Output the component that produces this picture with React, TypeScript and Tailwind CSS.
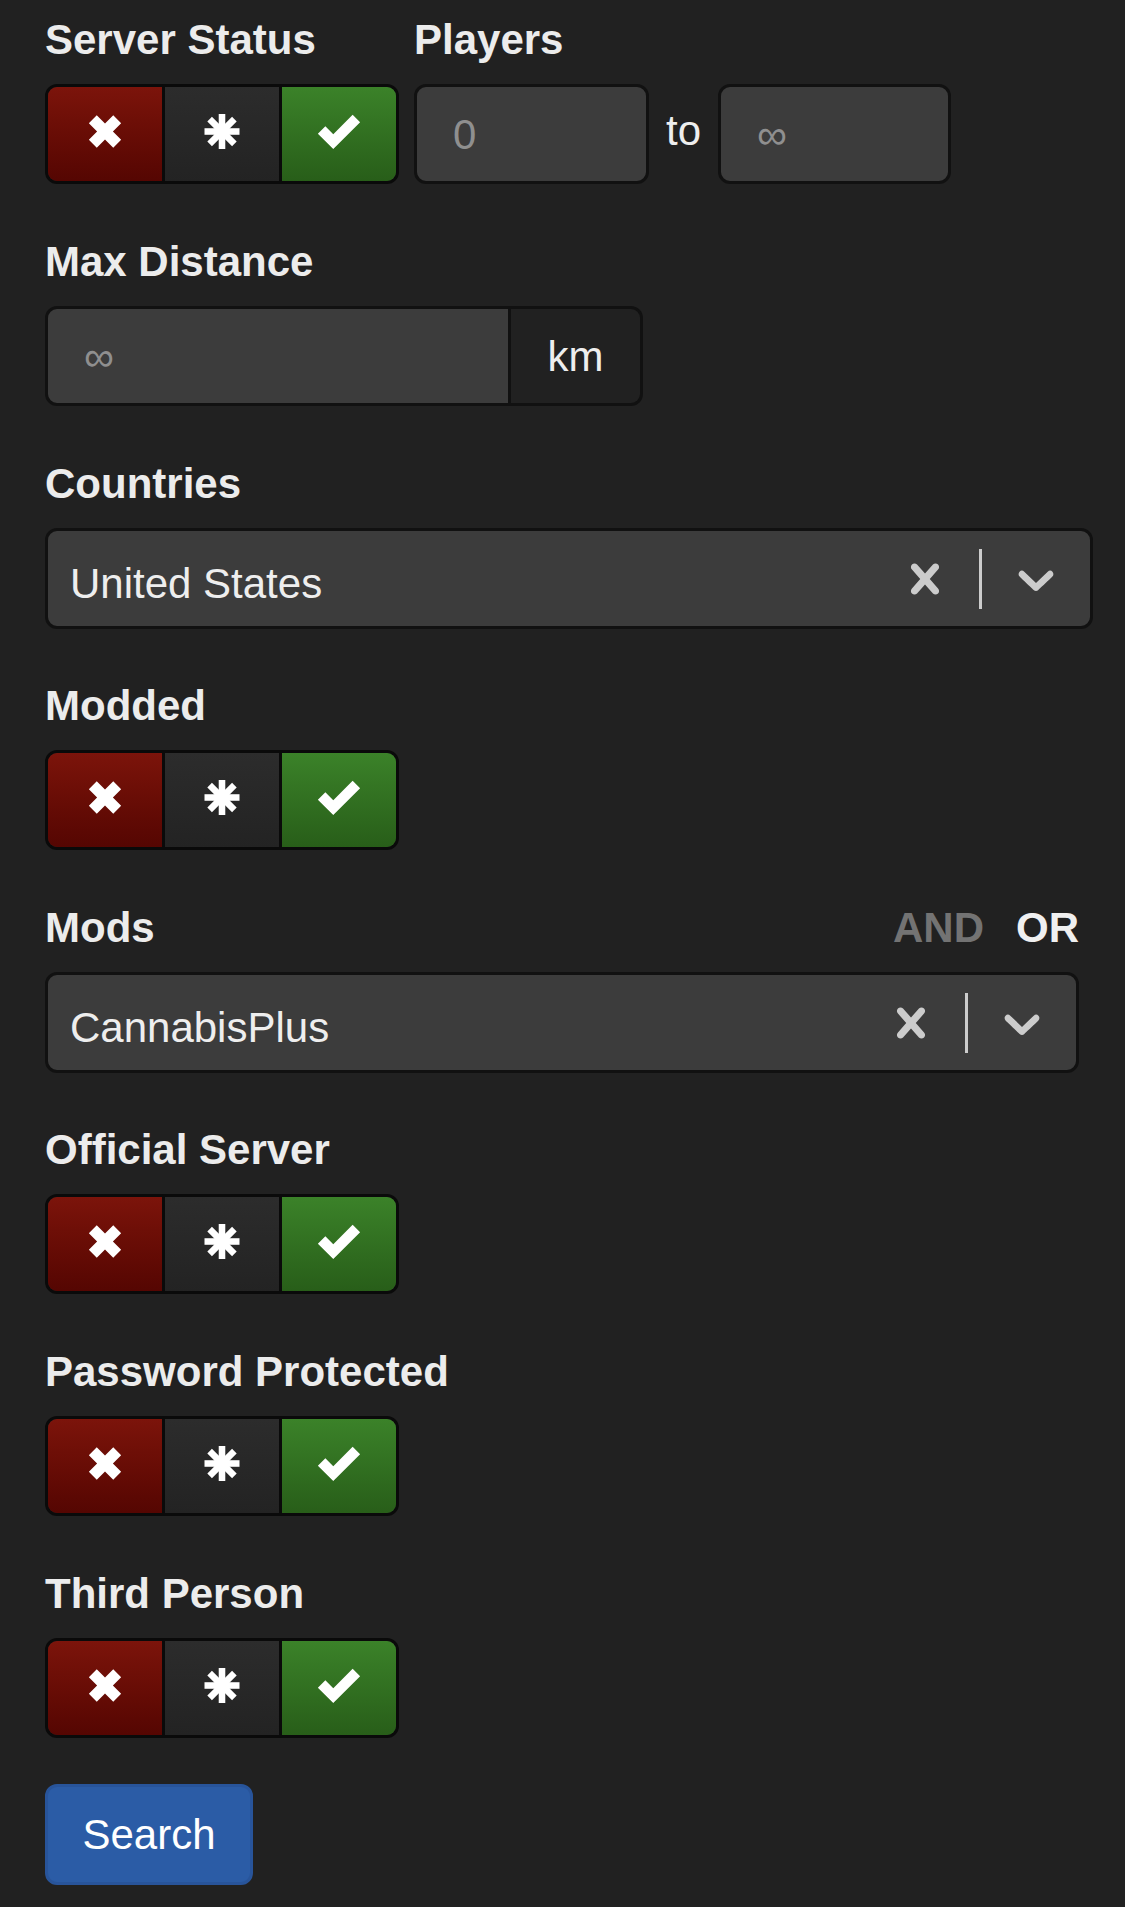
import React from 'react';

const XIcon = () => (
    <svg width="34" height="33" viewBox="4 4 92 92" fill="#fff">
        <path d="M5 27 L27 5 L50 28 L73 5 L95 27 L72 50 L95 73 L73 95 L50 72 L27 95 L5 73 L28 50 Z" />
    </svg>
);

const AsteriskIcon = () => (
    <svg width="36" height="35" viewBox="2 2 96 96" fill="#fff">
        <circle cx="50" cy="50" r="22" />
        <rect x="41" y="2" width="18" height="96" />
        <rect x="41" y="2" width="18" height="96" transform="rotate(45 50 50)" />
        <rect x="41" y="2" width="18" height="96" transform="rotate(90 50 50)" />
        <rect x="41" y="2" width="18" height="96" transform="rotate(135 50 50)" />
    </svg>
);

const CheckIcon = () => (
    <svg width="44" height="37" viewBox="0 0 100 84" fill="#fff">
        <path d="M2 47 L19 30 L37 48 L81 4 L98 21 L37 82 Z" />
    </svg>
);

const CrossIcon = () => (
    <svg width="60" height="60" viewBox="0 0 20 20" fill="#cccccc">
        <path d="M14.348 14.849c-0.469 0.469-1.229 0.469-1.697 0l-2.651-3.030-2.651 3.029c-0.469 0.469-1.229 0.469-1.697 0-0.469-0.469-0.469-1.229 0-1.697l2.758-3.150-2.759-3.152c-0.469-0.469-0.469-1.228 0-1.697s1.228-0.469 1.697 0l2.652 3.031 2.651-3.031c0.469-0.469 1.228-0.469 1.697 0s0.469 1.229 0 1.697l-2.758 3.152 2.758 3.150c0.469 0.469 0.469 1.229 0 1.698z" />
    </svg>
);

const ChevronIcon = () => (
    <svg width="60" height="60" viewBox="0 0 20 20" fill="#cccccc">
        <path d="M4.516 7.548c0.436-0.446 1.043-0.481 1.576 0l3.908 3.747 3.908-3.747c0.533-0.481 1.141-0.446 1.574 0 0.436 0.445 0.408 1.197 0 1.615-0.406 0.418-4.695 4.502-4.695 4.502-0.217 0.223-0.502 0.335-0.787 0.335s-0.57-0.112-0.789-0.335c0 0-4.287-4.084-4.695-4.502s-0.436-1.17 0-1.615z" />
    </svg>
);

const Label = ({ children }: { children: React.ReactNode }) => (
    <div className="mb-[14px] h-[60px] text-[42px] leading-[60px] font-bold text-[#ececec]">{children}</div>
);

const Toggle = () => (
    <div className="flex h-[100px] w-[354px] overflow-hidden rounded-[12px] border-[3px] border-[#0a0a0a]">
        <div className="flex w-[114px] items-center justify-center bg-linear-to-b from-[#7c140b] to-[#550602] pb-[6px]">
            <XIcon />
        </div>
        <div className="flex w-[120px] items-center justify-center border-x-[3px] border-[#0a0a0a] bg-linear-to-b from-[#2c2c2c] to-[#232323] pb-[6px]">
            <AsteriskIcon />
        </div>
        <div className="flex flex-1 items-center justify-center bg-linear-to-b from-[#3b8229] to-[#285e19] pb-[6px]">
            <CheckIcon />
        </div>
    </div>
);

const Select = ({ value, width }: { value: string; width: string }) => (
    <div className={`flex h-[101px] items-center rounded-[12px] border-[3px] border-[#111] bg-[#3c3c3c] ${width}`}>
        <div className="flex-1 pt-[10px] pl-[22px] text-[42px] text-[#eeeeee]">{value}</div>
        <div className="flex items-center">
            <div className="p-[24px]">
                <CrossIcon />
            </div>
            <span className="h-[60px] w-[3px] bg-[#cccccc]" />
            <div className="p-[24px]">
                <ChevronIcon />
            </div>
        </div>
    </div>
);

const TextInput = ({ placeholder, className }: { placeholder: string; className: string }) => (
    <div className={`flex h-[100px] items-center border-[3px] border-[#111] bg-[#3c3c3c] px-[36px] text-[42px] text-[#8f8f8f] ${className}`}>
        {placeholder}
    </div>
);

export default function App() {
    return (
        <div className="min-h-[1907px] bg-[#212121] pt-[10px] pl-[45px] font-['Liberation_Sans',Arial,sans-serif]">
            <div className="mb-[48px] flex gap-[15px]">
                <div>
                    <Label>Server Status</Label>
                    <Toggle />
                </div>
                <div>
                    <Label>Players</Label>
                    <div className="flex items-center gap-[17px]">
                        <TextInput placeholder="0" className="w-[235px] rounded-[12px]" />
                        <span className="pb-[8px] text-[42px] text-[#eeeeee]">to</span>
                        <TextInput placeholder="∞" className="w-[233px] rounded-[12px]" />
                    </div>
                </div>
            </div>

            <div className="mb-[48px]">
                <Label>Max Distance</Label>
                <div className="flex w-[598px]">
                    <TextInput placeholder="∞" className="flex-1 rounded-l-[12px]" />
                    <div className="flex h-[100px] w-[132px] items-center justify-center rounded-r-[12px] border-[3px] border-l-0 border-[#111] bg-[#212121] text-[42px] text-[#eeeeee]">
                        km
                    </div>
                </div>
            </div>

            <div className="mb-[47px]">
                <Label>Countries</Label>
                <Select value="United States" width="w-[1048px]" />
            </div>

            <div className="mb-[48px]">
                <Label>Modded</Label>
                <Toggle />
            </div>

            <div className="mb-[47px] w-[1034px]">
                <div className="flex items-start justify-between">
                    <Label>Mods</Label>
                    <div className="flex h-[60px] gap-[32px] text-[42px] leading-[60px] font-bold">
                        <span className="text-[#737373]">AND</span>
                        <span className="text-[#f0f0f0]">OR</span>
                    </div>
                </div>
                <Select value="CannabisPlus" width="w-[1034px]" />
            </div>

            <div className="mb-[48px]">
                <Label>Official Server</Label>
                <Toggle />
            </div>

            <div className="mb-[48px]">
                <Label>Password Protected</Label>
                <Toggle />
            </div>

            <div className="mb-[46px]">
                <Label>Third Person</Label>
                <Toggle />
            </div>

            <button className="h-[101px] w-[208px] rounded-[12px] border-[3px] border-[#28549a] bg-[#2b5ca6] text-[42px] text-white">
                Search
            </button>
        </div>
    );
}
